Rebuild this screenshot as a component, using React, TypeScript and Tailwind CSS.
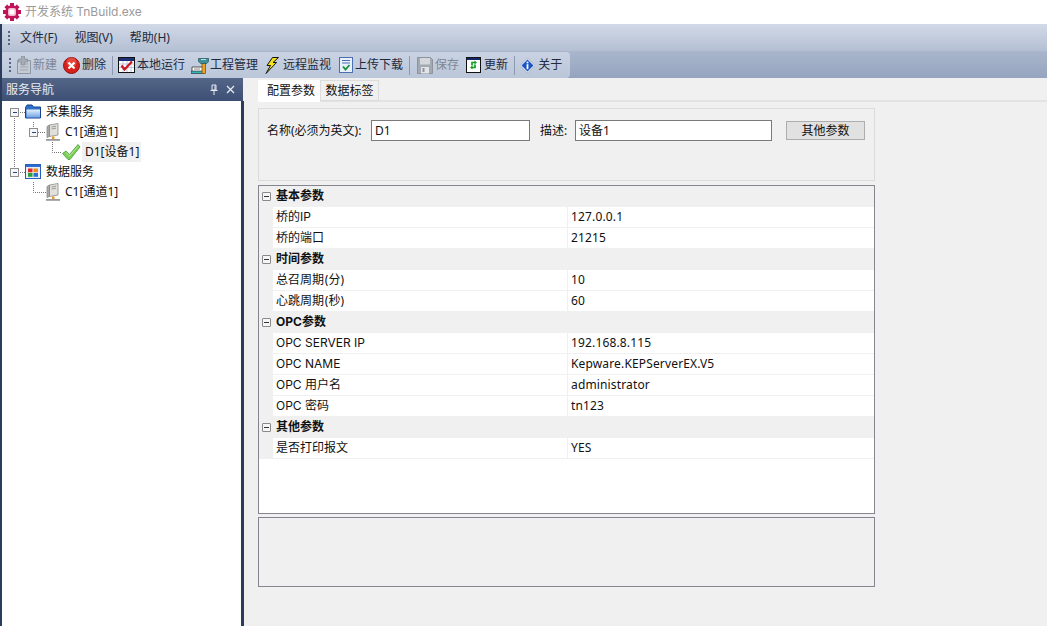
import type { ReactNode } from "react";

const FONT = "font-['Noto_Sans','Noto_Sans_CJK_SC',sans-serif]";
const GRID_FONT = "font-['Inter','Noto_Sans_CJK_SC',sans-serif]";

function Gear() {
  return (
    <svg width="18" height="18" viewBox="0 0 18 18">
      <g stroke="#c0145a" strokeWidth="4">
        <path d="M9 0v18M0 9h18M2.800 2.800l12.400 12.400M15.200 2.800 2.800 15.200" />
      </g>
      <circle cx="9" cy="9" r="6.800" fill="#c0145a" />
      <rect x="5" y="5" width="8" height="8" rx="2" fill="#f4b8cf" />
      <rect x="6.500" y="6.500" width="5" height="5" rx="1" fill="#fff" />
    </svg>
  );
}

function Grip() {
  return (
    <svg width="3" height="16" viewBox="0 0 3 16" className="shrink-0">
      {[1, 5, 9, 13].map((y) => (
        <rect key={y} x="0" y={y} width="2" height="2" fill="#56667f" />
      ))}
    </svg>
  );
}

function NewIcon() {
  return (
    <svg width="17" height="18" viewBox="0 0 17 18">
      <path d="M2.500 4.500h13v13h-13z" fill="#c4cad3" stroke="#8f97a3" />
      <path d="M5 8h8M5 11h8M5 14h8" stroke="#a0a7b2" />
      <path d="M6.500 0h3v3h3v3h-3v3h-3V6h-3V3h3z" fill="#a7adb6" stroke="#7f8791" strokeWidth=".6" />
    </svg>
  );
}

function DeleteIcon() {
  return (
    <svg width="17" height="17" viewBox="0 0 17 17">
      <circle cx="8.500" cy="8.500" r="8" fill="#d9201a" stroke="#8f1410" />
      <circle cx="8.500" cy="5.500" r="5" fill="#ee6a5f" opacity=".55" />
      <path d="m5.500 5.500 6 6m0-6-6 6" stroke="#fff" strokeWidth="2.200" />
    </svg>
  );
}

function RunIcon() {
  return (
    <svg width="17" height="16" viewBox="0 0 17 16">
      <rect x=".5" y=".5" width="16" height="15" fill="#fff" stroke="#111" />
      <rect x="1" y="1" width="15" height="3" fill="#1c2f7a" />
      <path d="M1 7h15M1 10.500h15M5 4v11M9 4v11M13 4v11" stroke="#aab2d0" strokeWidth=".7" />
      <path d="m3.500 8.500 3 4L14 4.500" fill="none" stroke="#d0141c" strokeWidth="2.200" />
    </svg>
  );
}

function ProjectIcon() {
  return (
    <svg width="18" height="17" viewBox="0 0 18 17">
      <path d="M1 10h11v5H1z" fill="#fff" stroke="#333" strokeWidth=".8" />
      <path d="M0 14h13v2.500H0z" fill="#35b3b8" stroke="#222" strokeWidth=".6" />
      <path d="M3 12h6" stroke="#888" />
      <rect x="11" y="6" width="3.500" height="10.500" fill="#e8a32c" stroke="#6b4a10" strokeWidth=".7" />
      <path d="M7.500 1.500h10.200v3l-2 2h-6l-2.200-2z" fill="#3f8f98" stroke="#1f5158" strokeWidth=".7" />
      <path d="M10 2.500h5" stroke="#bfe4e6" />
    </svg>
  );
}

function BoltIcon() {
  return (
    <svg width="14" height="17" viewBox="0 0 14 17">
      <path d="M7.500.5 13.500.5 8 5.500h3.500L1 16.500l4.500-8H2z" fill="#f4e21c" stroke="#111" strokeWidth="1" />
    </svg>
  );
}

function UploadIcon() {
  return (
    <svg width="14" height="16" viewBox="0 0 14 16">
      <rect x=".5" y=".5" width="13" height="15" fill="#e7f0fb" stroke="#4c6fb0" />
      <path d="M3 3.500h8M3 6h8" stroke="#4c6fb0" />
      <path d="m4 9.500 2.500 3L10.500 8" fill="none" stroke="#16913a" strokeWidth="1.800" />
    </svg>
  );
}

function SaveIcon() {
  return (
    <svg width="16" height="17" viewBox="0 0 16 17">
      <path d="M.5.5h13l2 2v14H.5z" fill="#a3a9b1" stroke="#8d939b" />
      <rect x="3" y="1" width="10" height="6.500" fill="#d4d7dc" />
      <rect x="4" y="10" width="8" height="6.500" fill="#e2e4e8" />
      <rect x="5.500" y="11" width="2" height="4" fill="#8d939b" />
    </svg>
  );
}

function RefreshIcon() {
  return (
    <svg width="15" height="16" viewBox="0 0 15 16">
      <rect x=".5" y=".5" width="14" height="15" fill="#fff" stroke="#111" />
      <rect x="1" y="1" width="13" height="2" fill="#14246f" />
      <path d="M9.500 5.500H6v3M5.500 10.500H9v-3" fill="none" stroke="#149a1f" strokeWidth="1.700" />
      <path d="m8.500 3.500 2.500 2-2.500 2zM6.500 8.500 4 10.500l2.500 2z" fill="#149a1f" />
    </svg>
  );
}

function AboutIcon() {
  return (
    <svg width="15" height="15" viewBox="0 0 15 15">
      <path d="M7.500 0 15 7.500 7.500 15 0 7.500z" fill="#f2f4f8" stroke="#8b97b0" strokeWidth=".6" />
      <path d="M7.500 1.500 13.500 7.500 7.500 13.500 1.500 7.500z" fill="#1b55c4" />
      <rect x="6.600" y="3.600" width="1.800" height="1.800" fill="#fff" />
      <rect x="6.600" y="6.200" width="1.800" height="5" fill="#fff" />
    </svg>
  );
}

function Sep() {
  return <div className="w-px h-[19px] bg-[#8c99b0] shrink-0" />;
}

function ToolItem({
  icon,
  label,
  disabled,
  className,
}: {
  icon: ReactNode;
  label: string;
  disabled?: boolean;
  className?: string;
}) {
  return (
    <div className={`flex items-center shrink-0 ${className ?? ""}`}>
      {icon}
      <span className={disabled ? "text-[#7f8794]" : "text-[#1f2a3d]"}>{label}</span>
    </div>
  );
}

function FolderIcon() {
  return (
    <g>
      <defs>
        <linearGradient id="folderBody" x1="0" y1="0" x2="0" y2="1">
          <stop offset="0" stopColor="#e6f0fc" />
          <stop offset="1" stopColor="#6fa3e4" />
        </linearGradient>
      </defs>
      <path d="M.5 3.500 2 1h5l1.500 2h7v11H.5z" fill="#2f6fc9" stroke="#17458f" />
      <path d="M1.500 5.500h13.500v8H1.500z" fill="url(#folderBody)" />
    </g>
  );
}

function AppIcon() {
  return (
    <g>
      <rect x=".5" y=".5" width="15" height="14" fill="#e7eef8" stroke="#2660b8" />
      <rect x="1" y="1" width="14" height="2" fill="#2c6fd0" />
      <rect x="3" y="4.500" width="4.500" height="3.800" fill="#dd2a22" />
      <rect x="8.500" y="4.500" width="4.500" height="3.800" fill="#f08a1d" />
      <rect x="3" y="9" width="4.500" height="3.800" fill="#2a9f3a" />
      <rect x="8.500" y="9" width="4.500" height="3.800" fill="#2c6fd0" />
    </g>
  );
}

function ServerIcon() {
  return (
    <g>
      <path d="M3.500 2 12 .5V12l-8.500 1.500z" fill="#e2e0da" stroke="#8c8c8c" strokeWidth=".8" />
      <path d="M1 3.500 3.500 2v11.500L1 14.500z" fill="#a8a8a8" stroke="#8c8c8c" strokeWidth=".8" />
      <path d="M5.500 4 10 3.200M5.500 6 10 5.200" stroke="#9d9d9d" />
      <path d="M6 13.500h2.500V16H6z" fill="#e89a2c" />
      <path d="M0 16h14v1.800H0z" fill="#9a9a9a" />
    </g>
  );
}

function CheckIcon() {
  return (
    <g>
      <path
        d="M.5 9.500 4 7l3.500 3.500L16 .5 18 3 8 15.500H6z"
        fill="#7ccf55"
        stroke="#469c3e"
        strokeWidth=".8"
      />
      <path d="M4.200 8.500 7.500 12 16 2.300" fill="none" stroke="#c4edb0" strokeWidth=".8" />
    </g>
  );
}

function Expander({ x, y }: { x: number; y: number }) {
  return (
    <g>
      <rect x={x - 3.500} y={y - 3.500} width="8" height="8" fill="#f4f6f8" stroke="#8d8d8d" />
      <path d={`M${x - 1} ${y + 0.500}h4`} stroke="#27477e" />
    </g>
  );
}

const DOT = { stroke: "#777", strokeDasharray: "1 1", fill: "none" } as const;

function TreeRow({
  width,
  children,
  label,
  textClass,
}: {
  width: number;
  children: ReactNode;
  label: string;
  textClass?: string;
}) {
  return (
    <div className="flex items-center h-5">
      <svg width={width} height="20" viewBox={`2 0 ${width} 20`} className="shrink-0">
        {children}
      </svg>
      <span className={`whitespace-nowrap text-[#111] ${textClass ?? ""}`}>{label}</span>
    </div>
  );
}

function Tree() {
  return (
    <div className="py-px">
      <TreeRow width={44} label="采集服务">
        <path d="M14.500 14v6M18 10.500h7" {...DOT} />
        <Expander x={14} y={10} />
        <g transform="translate(25 2)">
          <FolderIcon />
        </g>
      </TreeRow>
      <TreeRow width={63} label="C1[通道1]">
        <path d="M14.500 0v20M33.500 0v6M38 10.500h8" {...DOT} />
        <Expander x={33} y={10} />
        <g transform="translate(46 1)">
          <ServerIcon />
        </g>
      </TreeRow>
      <TreeRow width={80} label="D1[设备1]" textClass="bg-[#f0f0f0] h-5 leading-5 px-[3px] w-[59px]">
        <path d="M14.500 0v20M52.500 0v10.500H62" {...DOT} />
        <g transform="translate(62 2)">
          <CheckIcon />
        </g>
      </TreeRow>
      <TreeRow width={44} label="数据服务">
        <path d="M14.500 0v7M18 10.500h7" {...DOT} />
        <Expander x={14} y={10} />
        <g transform="translate(25 2)">
          <AppIcon />
        </g>
      </TreeRow>
      <TreeRow width={63} label="C1[通道1]">
        <path d="M33.500 0v10.500H46" {...DOT} />
        <g transform="translate(46 1)">
          <ServerIcon />
        </g>
      </TreeRow>
    </div>
  );
}

const GROUPS = [
  {
    title: "基本参数",
    rows: [
      ["桥的IP", "127.0.0.1"],
      ["桥的端口", "21215"],
    ],
  },
  {
    title: "时间参数",
    rows: [
      ["总召周期(分)", "10"],
      ["心跳周期(秒)", "60"],
    ],
  },
  {
    title: "OPC参数",
    rows: [
      ["OPC SERVER IP", "192.168.8.115"],
      ["OPC NAME", "Kepware.KEPServerEX.V5"],
      ["OPC 用户名", "administrator"],
      ["OPC 密码", "tn123"],
    ],
  },
  {
    title: "其他参数",
    rows: [["是否打印报文", "YES"]],
  },
];

function PropGrid() {
  return (
    <div className={`h-[329px] border border-[#85858f] bg-white ${GRID_FONT}`}>
      {GROUPS.map((g) => (
        <div key={g.title}>
          <div className="h-[21px] flex items-center bg-[#f0f0f0] pb-px">
            <span className="w-[14px] flex justify-center shrink-0">
              <span className="w-[9px] h-[9px] border border-[#8a8a8a] rounded-[1px] bg-[#f6f6f6] flex items-center justify-center ml-px">
                <span className="w-[5px] h-px bg-[#333]" />
              </span>
            </span>
            <span className="pl-[3px] font-bold text-[#111]">{g.title}</span>
          </div>
          {g.rows.map(([k, v]) => (
            <div key={k} className="h-[21px] flex bg-[#f0f0f0]">
              <div className="w-[14px] shrink-0" />
              <div className="w-[295px] shrink-0 bg-white border-b border-r border-[#f0f0f0] pl-[3px] leading-[20px] text-[#111]">
                {k}
              </div>
              <div className={`flex-1 bg-white border-b border-[#f0f0f0] pl-[3px] leading-[20px] text-[#111] tracking-[0.15px] ${FONT}`}>
                {v}
              </div>
            </div>
          ))}
        </div>
      ))}
    </div>
  );
}

export default function App() {
  return (
    <div className={`h-[626px] w-[1047px] overflow-hidden flex flex-col bg-[#f0f0f0] text-xs ${FONT}`}>
      <div className="h-6 shrink-0 bg-white flex items-center pl-[3px] gap-1 text-[#9a9a9a]">
        <Gear />
        <span>
          开发系统 <span className={GRID_FONT}>TnBuild.exe</span>
        </span>
      </div>

      <div className="h-[27px] shrink-0 bg-gradient-to-b from-[#d2dae8] to-[#b4bfd3] border-l-2 border-[#2c3c5c] flex items-center pl-[6px]">
        <Grip />
        <div className="flex gap-[17px] pl-[9px] text-[#1f2a3d]">
          <span>文件(F)</span>
          <span>视图(V)</span>
          <span>帮助(H)</span>
        </div>
      </div>

      <div className="h-[27px] shrink-0 bg-gradient-to-b from-[#a9b6cc] to-[#95a4bf] border-l-2 border-[#2c3c5c] flex items-stretch pt-px">
        <div className="w-[568px] bg-gradient-to-b from-[#c9d3e3] to-[#bac6d9] rounded-r-[4px] flex items-center pl-[7px]">
          <Grip />
          <ToolItem className="ml-[3px] gap-px" disabled icon={<NewIcon />} label="新建" />
          <ToolItem className="ml-[6px] gap-[2px]" icon={<DeleteIcon />} label="删除" />
          <div className="ml-[6px]">
            <Sep />
          </div>
          <ToolItem className="ml-[5px] gap-[2px]" icon={<RunIcon />} label="本地运行" />
          <ToolItem className="ml-[6px] gap-px" icon={<ProjectIcon />} label="工程管理" />
          <ToolItem className="ml-[7px] gap-1" icon={<BoltIcon />} label="远程监视" />
          <ToolItem className="ml-[8px] gap-[2px]" icon={<UploadIcon />} label="上传下载" />
          <div className="ml-[6px]">
            <Sep />
          </div>
          <ToolItem className="ml-[7px] gap-[2px]" disabled icon={<SaveIcon />} label="保存" />
          <ToolItem className="ml-[7px] gap-[3px]" icon={<RefreshIcon />} label="更新" />
          <div className="ml-[6px]">
            <Sep />
          </div>
          <ToolItem className="ml-[5px] gap-[3px]" icon={<AboutIcon />} label="关于" />
        </div>
      </div>

      <div className="flex-1 flex min-h-0">
        <div className="w-[245px] shrink-0 flex flex-col border-l-2 border-[#2c3c5c]">
          <div className="h-[23px] shrink-0 bg-gradient-to-b from-[#536688] to-[#3d5074] flex items-center text-[#e6ebf3] pl-[4px] pr-[8px] w-[241px]">
            <span className="flex-1">服务导航</span>
            <svg width="10" height="11" viewBox="0 0 10 11" className="mr-[7px]">
              <path d="M3 1h4v5H3zM1.500 6.500h7M5 7v4M6 1.500v4.500" stroke="#e6ebf3" fill="none" />
            </svg>
            <svg width="9" height="9" viewBox="0 0 9 9">
              <path d="m1 1 7 7m0-7-7 7" stroke="#e6ebf3" strokeWidth="1.300" />
            </svg>
          </div>
          <div className="flex-1 flex">
            <div className="w-[239px] bg-white">
              <Tree />
            </div>
            <div className="w-[3px] bg-[#2c3c5c]" />
          </div>
        </div>

        <div className="flex-1 pl-[13px] flex flex-col">
          <div className="flex h-[24px] shrink-0 pt-[2px] border-b-2 border-[#e3e3e3]">
            <div className="w-[62px] h-[22px] bg-white text-[#111] flex items-center pl-[9px]">配置参数</div>
            <div className="w-[59px] h-[21px] border border-[#dcdcdc] text-[#111] flex items-center justify-center">
              数据标签
            </div>
          </div>
          <div className="w-[617px]">
            <div className="mt-[6px] h-[73px] border border-[#dcdcdc] flex items-start pt-[11px] pl-[8px]">
              <span className="w-[104px] leading-[21px] text-[#111]">名称(必须为英文):</span>
              <div className="w-[159px] h-[21px] bg-white border border-[#7a7a7a] pl-[3px] leading-[19px] text-[#111]">
                D1
              </div>
              <span className="ml-[10px] w-[35px] leading-[21px] text-[#111]">描述:</span>
              <div className="w-[197px] h-[21px] bg-white border border-[#7a7a7a] pl-[3px] leading-[19px] text-[#111]">
                设备1
              </div>
              <button className="ml-[14px] w-[79px] h-[19px] mt-px bg-[#e1e1e1] border border-[#adadad] text-[#111] leading-[17px]">
                其他参数
              </button>
            </div>
            <div className="mt-[4px]">
              <PropGrid />
            </div>
            <div className="mt-[3px] h-[70px] border border-[#85858f]" />
          </div>
        </div>
      </div>
    </div>
  );
}
